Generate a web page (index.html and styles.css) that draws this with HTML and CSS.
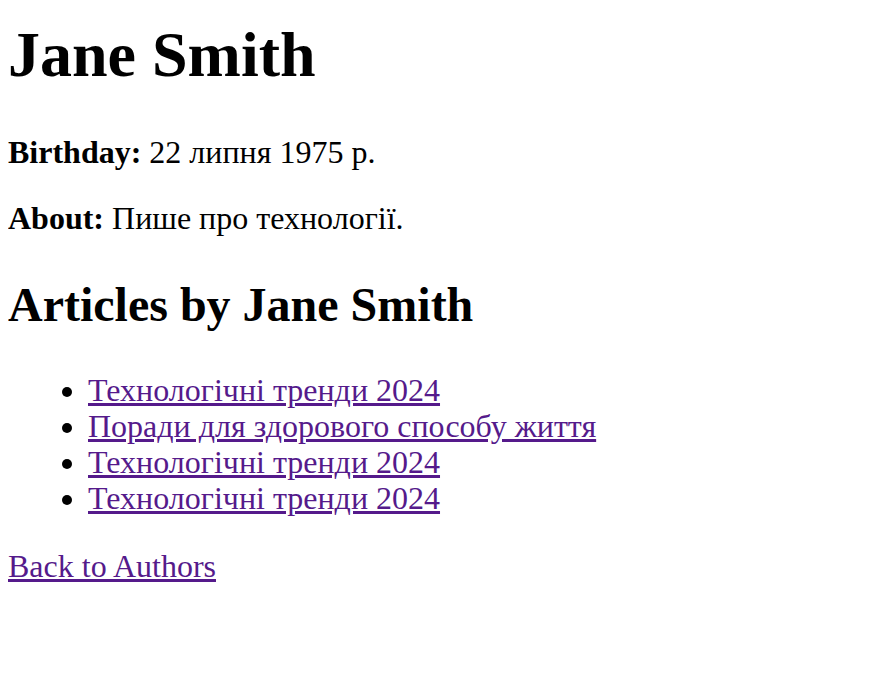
FILE: index.html
```html
<!DOCTYPE html>
<html lang="uk">
<head>
<meta charset="utf-8">
<title>Jane Smith</title>
<link rel="stylesheet" href="styles.css">
</head>
<body>
<h1 class="name">Jane Smith</h1>
<p class="field"><strong>Birthday:</strong> 22 липня 1975 р.</p>
<p class="field"><strong>About:</strong> Пише про технології.</p>
<h2 class="section-title">Articles by Jane Smith</h2>
<ul class="articles">
  <li><a class="link" href="#">Технологічні тренди 2024</a></li>
  <li><a class="link" href="#">Поради для здорового способу життя</a></li>
  <li><a class="link" href="#">Технологічні тренди 2024</a></li>
  <li><a class="link" href="#">Технологічні тренди 2024</a></li>
</ul>
<p class="back"><a class="link" href="#">Back to Authors</a></p>
</body>
</html>
```
FILE: styles.css
```css
html, body {
  background: #ffffff;
}
body {
  margin: 8px;
  font-family: "Liberation Serif", "Times New Roman", serif;
  font-size: 32px;
  line-height: 36px;
  color: #000000;
}
.name {
  font-size: 64px;
  line-height: 72px;
  font-weight: bold;
  margin: 11px 0 43px;
}
.field {
  margin: 30px 0;
}
.section-title {
  font-size: 48px;
  line-height: 54px;
  font-weight: bold;
  margin: 42px 0 40px;
}
.articles {
  margin: 40px 0 32px;
  padding-left: 80px;
}
.back {
  margin: 32px 0 32px;
}
.link {
  color: #551a8b;
  text-decoration: underline;
}
```
